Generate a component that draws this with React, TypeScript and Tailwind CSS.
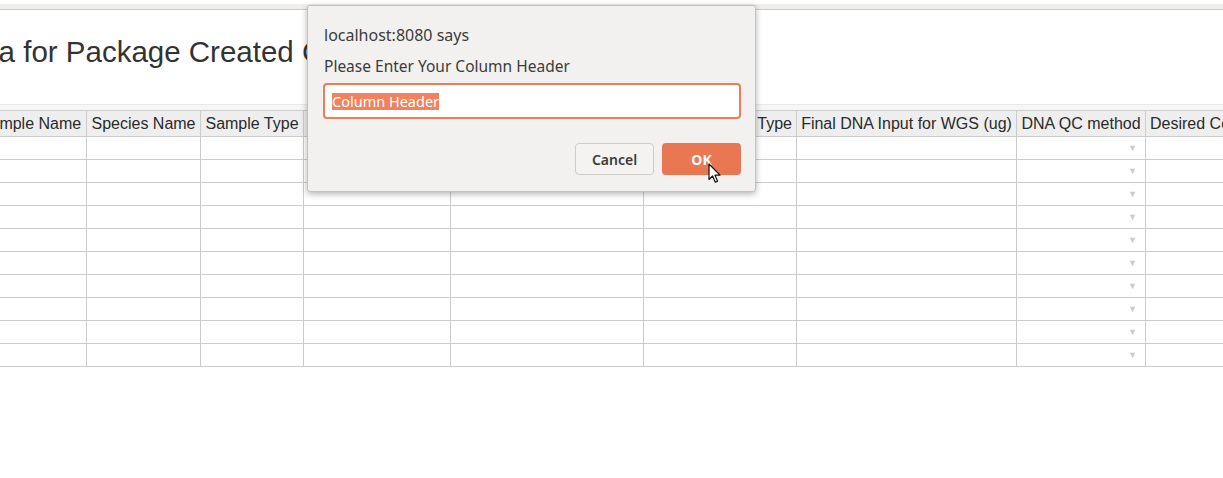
import React from 'react';

const columns = [
  { title: 'Sample Name', width: 'w-[112px]', align: 'justify-center' },
  { title: 'Species Name', width: 'w-[114px]', align: 'justify-center' },
  { title: 'Sample Type', width: 'w-[103px]', align: 'justify-center' },
  { title: 'Tissue Source', width: 'w-[147px]', align: 'justify-center' },
  { title: 'DNA Extraction Method', width: 'w-[193px]', align: 'justify-center' },
  { title: 'Library Prep Type', width: 'w-[153px]', align: 'justify-end' },
  { title: 'Final DNA Input for WGS (ug)', width: 'w-[220px]', align: 'justify-center' },
  { title: 'DNA QC method', width: 'w-[129px]', align: 'justify-center' },
  { title: 'Desired Coverage', width: 'w-[160px]', align: 'justify-start' },
];

const rows = Array.from({ length: 10 }, (_, i) => i);

const Cursor = () => (
  <svg width="14" height="21" viewBox="0 0 14 21" className="absolute left-[708px] top-[163px]">
    <path
      d="M1 1 L1 16.5 L4.6 13 L7.3 19.3 L9.6 18.3 L7 12.2 L12 12.2 Z"
      fill="#ffffff"
      stroke="#111111"
      strokeWidth="1.2"
      strokeLinejoin="round"
    />
  </svg>
);

const PromptDialog = () => (
  <div
    className="absolute left-[307px] top-[5px] w-[449px] h-[187px] bg-[#f2f1f0] border border-[#c4c1bc] rounded-[3px] shadow-[0_2px_6px_rgba(0,0,0,0.3)] px-[15px] pt-[14px] text-[#3c3c3c]"
    style={{ fontFamily: '"Noto Sans", "Open Sans", sans-serif' }}
  >
    <div className="pl-[1px] text-[16px] leading-[30px]">localhost:8080 says</div>
    <div className="pl-[1px] mt-[2px] text-[15.5px] leading-[29px]">Please Enter Your Column Header</div>
    <div className="mt-[2px] h-[36px] w-[418px] border-2 border-[#ee7c56] rounded-[4px] bg-white flex items-center pl-[7px]">
      <span className="bg-[#f0825e] text-white text-[14.5px] leading-[17px]">Column Header</span>
    </div>
    <div className="mt-[24px] w-[418px] flex justify-end gap-[8px]">
      <button className="w-[79px] h-[32px] rounded-[4px] border border-[#cfccc8] bg-[#f4f3f2] text-[14px] font-semibold text-[#3c3c3c]">
        Cancel
      </button>
      <button className="w-[79px] h-[32px] rounded-[4px] bg-[#e97752] text-[14px] font-bold text-white">
        OK
      </button>
    </div>
  </div>
);

export default function App() {
  return (
    <div
      className="relative w-[1223px] h-[478px] overflow-hidden bg-white text-[#333]"
      style={{ fontFamily: '"Liberation Sans", Arial, sans-serif' }}
    >
      {/* browser strip */}
      <div className="h-[4px] bg-white" />
      <div className="h-[5px] bg-[#efeeec]" />
      <div className="h-px bg-[#c9c9c9]" />

      <h2 className="-ml-[108px] mt-[25px] text-[29.5px] leading-[33px] whitespace-nowrap text-[#333]">
        Metadata for Package Created Columns
      </h2>

      <div className="mt-[36px] h-[6px] bg-[#f6f6f6] border-t border-[#e8e8e8]" />

      {/* table */}
      <div className="-ml-[25px] flex flex-col w-max">
        <div className="flex">
          {columns.map((c) => (
            <div
              key={c.title}
              className={`${c.width} shrink-0 h-[27px] border-t border-b border-r border-[#cccccc] bg-[#eeeeee] flex ${c.align} items-center px-[4px] overflow-hidden whitespace-nowrap text-[16px] leading-[25px] text-[#2a2a2a]`}
            >
              {c.title}
            </div>
          ))}
        </div>
        {rows.map((r) => (
          <div key={r} className="flex">
            {columns.map((c, ci) => (
              <div
                key={c.title}
                className={`${c.width} shrink-0 h-[23px] border-b border-r border-[#cccccc] bg-white flex items-center justify-end pr-[8px]`}
              >
                {ci === 7 && <span className="text-[9px] text-[#cccccc] leading-none">▼</span>}
              </div>
            ))}
          </div>
        ))}
      </div>

      <PromptDialog />
      <Cursor />
    </div>
  );
}
